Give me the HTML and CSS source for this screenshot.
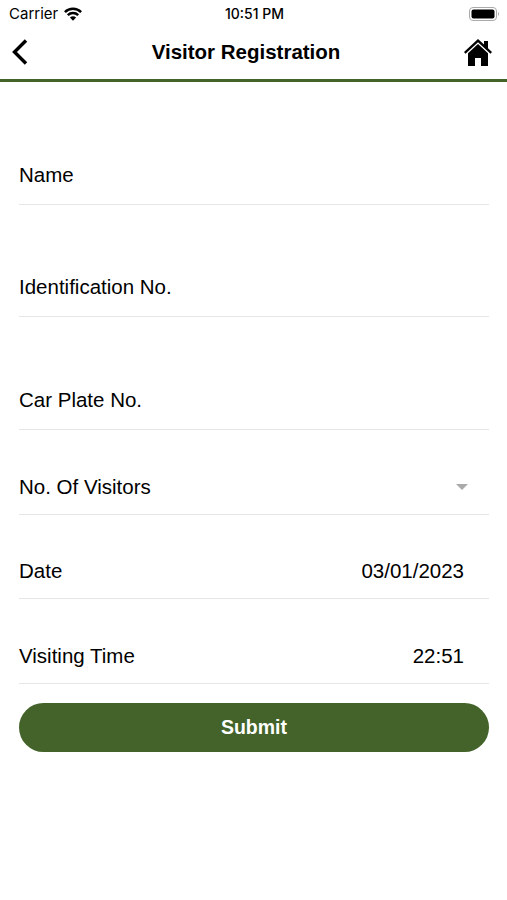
FILE: index.html
```html
<!DOCTYPE html>
<html lang="en">
<head>
<meta charset="utf-8">
<title>Visitor Registration</title>
<link rel="stylesheet" href="styles.css">
</head>
<body>
<div class="status">
  <div class="carrier"><span>Carrier</span>
    <svg width="18" height="14" viewBox="0 0 18 14"><g fill="none" stroke="#000" stroke-width="2.5"><path d="M.9 5.1C5.4.7 12.6.7 17.1 5.1"/><path d="M3.8 8.2C6.7 5.4 11.3 5.4 14.2 8.2"/></g><path d="M9 13.7 5.9 10.5Q9 7.9 12.1 10.5Z"/></svg>
  </div>
  <div class="clock">10:51 PM</div>
  <svg class="battery" width="31" height="14" viewBox="0 0 31 14"><rect x=".5" y=".5" width="27" height="13" rx="3.5" fill="none" stroke="#aaa"/><rect x="2.5" y="2.5" width="23" height="9" rx="2"/><path d="M29 5q2 2 0 4z" fill="#aaa"/></svg>
</div>
<header class="header">
  <svg width="16" height="26" viewBox="0 0 16 26"><path d="M14 1.5 2.5 13 14 24.5" fill="none" stroke="#000" stroke-width="3.4"/></svg>
  <h1>Visitor Registration</h1>
  <svg width="28" height="27" viewBox="0 0 28 27"><path d="M14 0 20 5.5V2h4v7.3l4 3.7-1.5 1.7L14 3.2 1.5 14.7 0 13Z"/><path d="M14 5 24 14.3V27h-7v-8h-6v8H4V14.3Z"/></svg>
</header>
<main class="form">
  <div class="field tall"><span>Name</span></div>
  <div class="field tall"><span>Identification No.</span></div>
  <div class="field tall"><span>Car Plate No.</span></div>
  <div class="field"><span>No. Of Visitors</span><i class="caret"></i></div>
  <div class="field"><span>Date</span><span class="value">03/01/2023</span></div>
  <div class="field"><span>Visiting Time</span><span class="value time">22:51</span></div>
  <button class="submit">Submit</button>
</main>
</body>
</html>
```
FILE: styles.css
```css
*{box-sizing:border-box}
body{margin:0;background:#fff;color:#000;font-family:"Liberation Sans",Arial,sans-serif}
.status{height:27px;display:grid;grid-template-columns:1fr auto 1fr;align-items:center;padding:0 7px 0 9px}
.carrier{display:flex;align-items:center;gap:6px;font:15px Inter,sans-serif}
.clock{font:500 14px Inter,sans-serif}
.battery{justify-self:end}
.header{height:55px;display:flex;justify-content:space-between;align-items:center;padding:0 15px 2px 12px;border-bottom:3px solid #43632a}
h1{margin:0;font-size:20.5px}
.form{padding:10px 18px 0 19px}
.field{height:84.7px;display:flex;justify-content:space-between;align-items:flex-end;padding:0 25px 15px 0;border-bottom:1px solid #e6e6e6;font-size:20.5px;line-height:24px}
.tall{height:112.7px;padding-bottom:17px}
.caret{border:6px solid transparent;border-top-color:#aaa;border-bottom:0;margin:0 -4px 9px}
.submit{display:block;width:100%;height:49px;margin-top:19px;border:0;border-radius:25px;background:#43632a;color:#fff;font:bold 19.5px "Liberation Sans",sans-serif}
```
